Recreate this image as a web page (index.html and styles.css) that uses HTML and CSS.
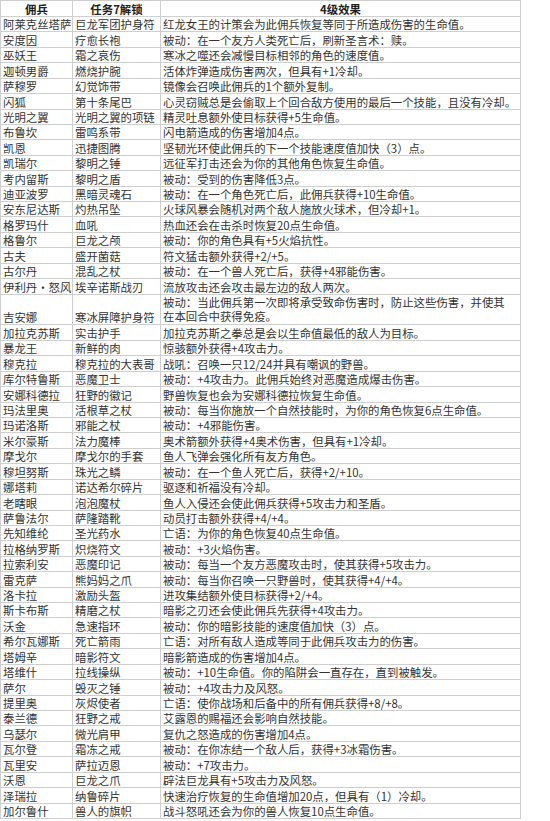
FILE: index.html
```html
<!DOCTYPE html>
<html lang="zh-CN">
<head>
<meta charset="utf-8">
<title>佣兵 4级效果</title>
<link rel="stylesheet" href="styles.css">
</head>
<body>
<div class="sheet">
<div class="row head"><div class="cell">佣兵</div><div class="cell">任务7解锁</div><div class="cell">4级效果</div></div>
<div class="row"><div class="cell">阿莱克丝塔萨</div><div class="cell">巨龙军团护身符</div><div class="cell">红龙女王的计策会为此佣兵恢复等同于所造成伤害的生命值。</div></div>
<div class="row"><div class="cell">安度因</div><div class="cell">疗愈长袍</div><div class="cell">被动：在一个友方人类死亡后，刷新圣言术：赎。</div></div>
<div class="row"><div class="cell">巫妖王</div><div class="cell">霜之哀伤</div><div class="cell">寒冰之噬还会减慢目标相邻的角色的速度值。</div></div>
<div class="row"><div class="cell">迦顿男爵</div><div class="cell">燃烧护腕</div><div class="cell">活体炸弹造成伤害两次，但具有+1冷却。</div></div>
<div class="row"><div class="cell">萨穆罗</div><div class="cell">幻觉饰带</div><div class="cell">镜像会召唤此佣兵的1个额外复制。</div></div>
<div class="row"><div class="cell">闪狐</div><div class="cell">第十条尾巴</div><div class="cell">心灵窃贼总是会偷取上个回合敌方使用的最后一个技能，且没有冷却。</div></div>
<div class="row"><div class="cell">光明之翼</div><div class="cell">光明之翼的项链</div><div class="cell">精灵吐息额外使目标获得+5生命值。</div></div>
<div class="row"><div class="cell">布鲁坎</div><div class="cell">雷鸣系带</div><div class="cell">闪电箭造成的伤害增加4点。</div></div>
<div class="row"><div class="cell">凯恩</div><div class="cell">迅捷图腾</div><div class="cell">坚韧光环使此佣兵的下一个技能速度值加快（3）点。</div></div>
<div class="row"><div class="cell">凯瑞尔</div><div class="cell">黎明之锤</div><div class="cell">远征军打击还会为你的其他角色恢复生命值。</div></div>
<div class="row"><div class="cell">考内留斯</div><div class="cell">黎明之盾</div><div class="cell">被动：受到的伤害降低3点。</div></div>
<div class="row"><div class="cell">迪亚波罗</div><div class="cell">黑暗灵魂石</div><div class="cell">被动：在一个角色死亡后，此佣兵获得+10生命值。</div></div>
<div class="row"><div class="cell">安东尼达斯</div><div class="cell">灼热吊坠</div><div class="cell">火球风暴会随机对两个敌人施放火球术，但冷却+1。</div></div>
<div class="row"><div class="cell">格罗玛什</div><div class="cell">血吼</div><div class="cell">热血还会在击杀时恢复20点生命值。</div></div>
<div class="row"><div class="cell">格鲁尔</div><div class="cell">巨龙之颅</div><div class="cell">被动：你的角色具有+5火焰抗性。</div></div>
<div class="row"><div class="cell">古夫</div><div class="cell">盛开菌菇</div><div class="cell">符文猛击额外获得+2/+5。</div></div>
<div class="row"><div class="cell">古尔丹</div><div class="cell">混乱之杖</div><div class="cell">被动：在一个兽人死亡后，获得+4邪能伤害。</div></div>
<div class="row"><div class="cell">伊利丹·怒风</div><div class="cell">埃辛诺斯战刃</div><div class="cell">流放攻击还会攻击最左边的敌人两次。</div></div>
<div class="row tall"><div class="cell">吉安娜</div><div class="cell">寒冰屏障护身符</div><div class="cell wrap">被动：当此佣兵第一次即将承受致命伤害时，防止这些伤害，并使其<br>在本回合中获得免疫。</div></div>
<div class="row"><div class="cell">加拉克苏斯</div><div class="cell">实击护手</div><div class="cell">加拉克苏斯之拳总是会以生命值最低的敌人为目标。</div></div>
<div class="row"><div class="cell">暴龙王</div><div class="cell">新鲜的肉</div><div class="cell">惊骇额外获得+4攻击力。</div></div>
<div class="row"><div class="cell">穆克拉</div><div class="cell">穆克拉的大表哥</div><div class="cell">战吼：召唤一只12/24并具有嘲讽的野兽。</div></div>
<div class="row"><div class="cell">库尔特鲁斯</div><div class="cell">恶魔卫士</div><div class="cell">被动：+4攻击力。此佣兵始终对恶魔造成爆击伤害。</div></div>
<div class="row"><div class="cell">安娜科德拉</div><div class="cell">狂野的徽记</div><div class="cell">野兽恢复也会为安娜科德拉恢复生命值。</div></div>
<div class="row"><div class="cell">玛法里奥</div><div class="cell">活根草之杖</div><div class="cell">被动：每当你施放一个自然技能时，为你的角色恢复6点生命值。</div></div>
<div class="row"><div class="cell">玛诺洛斯</div><div class="cell">邪能之杖</div><div class="cell">被动：+4邪能伤害。</div></div>
<div class="row"><div class="cell">米尔豪斯</div><div class="cell">法力魔棒</div><div class="cell">奥术箭额外获得+4奥术伤害，但具有+1冷却。</div></div>
<div class="row"><div class="cell">摩戈尔</div><div class="cell">摩戈尔的手套</div><div class="cell">鱼人飞弹会强化所有友方角色。</div></div>
<div class="row"><div class="cell">穆坦努斯</div><div class="cell">珠光之鳞</div><div class="cell">被动：在一个鱼人死亡后，获得+2/+10。</div></div>
<div class="row"><div class="cell">娜塔莉</div><div class="cell">诺达希尔碎片</div><div class="cell">驱逐和祈福没有冷却。</div></div>
<div class="row"><div class="cell">老瞎眼</div><div class="cell">泡泡魔杖</div><div class="cell">鱼人入侵还会使此佣兵获得+5攻击力和圣盾。</div></div>
<div class="row"><div class="cell">萨鲁法尔</div><div class="cell">萨隆踏靴</div><div class="cell">动员打击额外获得+4/+4。</div></div>
<div class="row"><div class="cell">先知维纶</div><div class="cell">圣光药水</div><div class="cell">亡语：为你的角色恢复40点生命值。</div></div>
<div class="row"><div class="cell">拉格纳罗斯</div><div class="cell">炽烧符文</div><div class="cell">被动：+3火焰伤害。</div></div>
<div class="row"><div class="cell">拉索利安</div><div class="cell">恶魔印记</div><div class="cell">被动：每当一个友方恶魔攻击时，使其获得+5攻击力。</div></div>
<div class="row"><div class="cell">雷克萨</div><div class="cell">熊妈妈之爪</div><div class="cell">被动：每当你召唤一只野兽时，使其获得+4/+4。</div></div>
<div class="row"><div class="cell">洛卡拉</div><div class="cell">激励头盔</div><div class="cell">进攻集结额外使目标获得+2/+4。</div></div>
<div class="row"><div class="cell">斯卡布斯</div><div class="cell">精磨之杖</div><div class="cell">暗影之刃还会使此佣兵先获得+4攻击力。</div></div>
<div class="row"><div class="cell">沃金</div><div class="cell">急速指环</div><div class="cell">被动：你的暗影技能的速度值加快（3）点。</div></div>
<div class="row"><div class="cell">希尔瓦娜斯</div><div class="cell">死亡箭雨</div><div class="cell">亡语：对所有敌人造成等同于此佣兵攻击力的伤害。</div></div>
<div class="row"><div class="cell">塔姆辛</div><div class="cell">暗影符文</div><div class="cell">暗影箭造成的伤害增加4点。</div></div>
<div class="row"><div class="cell">塔维什</div><div class="cell">拉线操纵</div><div class="cell">被动：+10生命值。你的陷阱会一直存在，直到被触发。</div></div>
<div class="row"><div class="cell">萨尔</div><div class="cell">毁灭之锤</div><div class="cell">被动：+4攻击力及风怒。</div></div>
<div class="row"><div class="cell">提里奥</div><div class="cell">灰烬使者</div><div class="cell">亡语：使你战场和后备中的所有佣兵获得+8/+8。</div></div>
<div class="row"><div class="cell">泰兰德</div><div class="cell">狂野之戒</div><div class="cell">艾露恩的赐福还会影响自然技能。</div></div>
<div class="row"><div class="cell">乌瑟尔</div><div class="cell">微光肩甲</div><div class="cell">复仇之怒造成的伤害增加4点。</div></div>
<div class="row"><div class="cell">瓦尔登</div><div class="cell">霜冻之戒</div><div class="cell">被动：在你冻结一个敌人后，获得+3冰霜伤害。</div></div>
<div class="row"><div class="cell">瓦里安</div><div class="cell">萨拉迈恩</div><div class="cell">被动：+7攻击力。</div></div>
<div class="row"><div class="cell">沃恩</div><div class="cell">巨龙之爪</div><div class="cell">辟法巨龙具有+5攻击力及风怒。</div></div>
<div class="row"><div class="cell">泽瑞拉</div><div class="cell">纳鲁碎片</div><div class="cell">快速治疗恢复的生命值增加20点，但具有（1）冷却。</div></div>
<div class="row"><div class="cell">加尔鲁什</div><div class="cell">兽人的旗帜</div><div class="cell">战斗怒吼还会为你的兽人恢复10点生命值。</div></div>
</div>
</body>
</html>
```

FILE: styles.css
```css
html, body {
  margin: 0;
  padding: 0;
  background: #ffffff;
}
body {
  font-family: "Noto Sans CJK SC", "Microsoft YaHei", sans-serif;
  font-size: 11.4px;
  color: #333333;
}
.sheet {
  width: 521px;
  border-left: 1px solid #cfcfcf;
  border-top: 1px solid #cfcfcf;
  box-sizing: border-box;
}
.row {
  display: grid;
  grid-template-columns: 72px 88px 360px;
  height: 15.43px;
  box-sizing: border-box;
  border-bottom: 1px solid #cfcfcf;
}
.row.head {
  height: 16px;
  font-weight: bold;
  text-align: center;
  color: #222222;
}
.row.tall {
  height: 30.86px;
}
.cell {
  border-right: 1px solid #cfcfcf;
  padding: 0 0 0 2px;
  white-space: nowrap;
  overflow: hidden;
  display: flex;
  align-items: flex-end;
  line-height: 14px;
}
.head .cell {
  justify-content: center;
  padding: 0;
}
.cell.wrap {
  white-space: normal;
  display: block;
  line-height: 14.5px;
}
```
